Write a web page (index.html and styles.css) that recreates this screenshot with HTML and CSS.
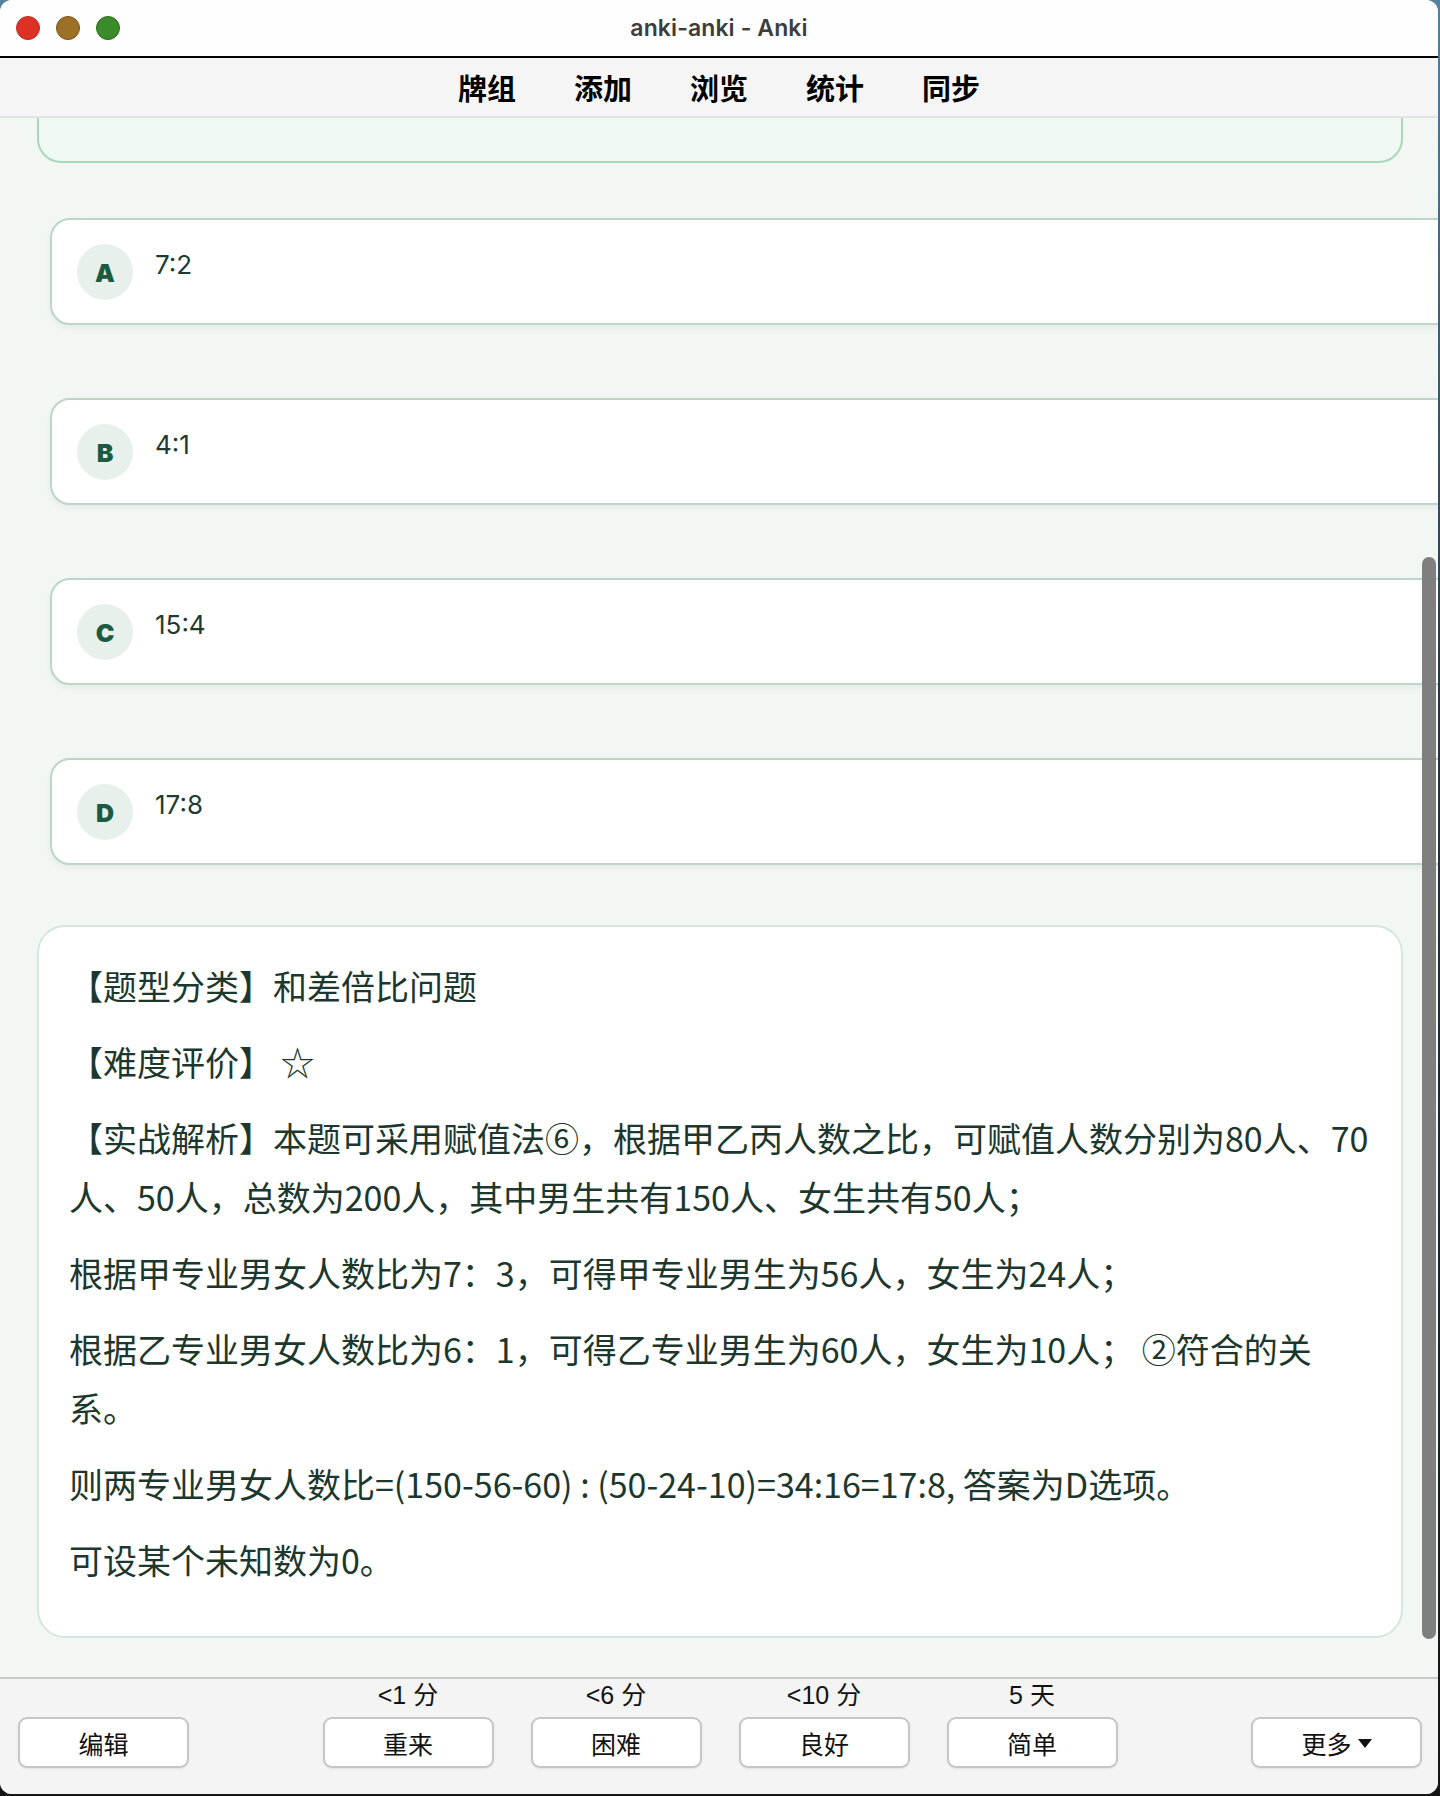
FILE: index.html
```html
<!DOCTYPE html>
<html lang="zh-CN">
<head>
    <meta charset="UTF-8">
    <meta name="viewport" content="width=device-width, initial-scale=1.0">
    <title>anki-anki - Anki</title>
    <link rel="stylesheet" href="styles.css">
</head>
<body>
    <div class="window">
        <div class="titlebar">
            <div class="lights">
                <span class="light red"></span>
                <span class="light yellow"></span>
                <span class="light green"></span>
            </div>
            <div class="title">anki-anki - Anki</div>
        </div>

        <div class="toolbar">
            <a href="#">牌组</a>
            <a href="#">添加</a>
            <a href="#">浏览</a>
            <a href="#">统计</a>
            <a href="#">同步</a>
        </div>

        <div class="review">
            <div class="question"></div>

            <div class="options">
                <div class="option">
                    <span class="letter">A</span>
                    <span class="option-text">7:2</span>
                </div>
                <div class="option">
                    <span class="letter">B</span>
                    <span class="option-text">4:1</span>
                </div>
                <div class="option">
                    <span class="letter">C</span>
                    <span class="option-text">15:4</span>
                </div>
                <div class="option">
                    <span class="letter">D</span>
                    <span class="option-text">17:8</span>
                </div>
            </div>

            <div class="explain">
                <p>【题型分类】和差倍比问题</p>
                <p>【难度评价】 ☆</p>
                <p>【实战解析】本题可采用赋值法⑥，根据甲乙丙人数之比，可赋值人数分别为80人、70人、50人，总数为200人，其中男生共有150人、女生共有50人；</p>
                <p>根据甲专业男女人数比为7：3，可得甲专业男生为56人，女生为24人；</p>
                <p>根据乙专业男女人数比为6：1，可得乙专业男生为60人，女生为10人； ②符合的关系。</p>
                <p>则两专业男女人数比=(150-56-60) : (50-24-10)=34:16=17:8, 答案为D选项。</p>
                <p>可设某个未知数为0。</p>
            </div>

            <div class="scroll-thumb"></div>
        </div>

        <div class="bottombar">
            <button class="btn">编辑</button>

            <div class="answers">
                <div class="answer">
                    <span class="due">&lt;1 分</span>
                    <button class="btn">重来</button>
                </div>
                <div class="answer">
                    <span class="due">&lt;6 分</span>
                    <button class="btn">困难</button>
                </div>
                <div class="answer">
                    <span class="due">&lt;10 分</span>
                    <button class="btn">良好</button>
                </div>
                <div class="answer">
                    <span class="due">5 天</span>
                    <button class="btn">简单</button>
                </div>
            </div>

            <button class="btn more">更多
                <svg width="14" height="9" viewBox="0 0 14 9"><path d="M0 0 H14 L7 9 Z" fill="#111"/></svg>
            </button>
        </div>
    </div>
</body>
</html>
```

FILE: styles.css
```css
html, body {
    margin: 0;
    padding: 0;
}

body {
    width: 1440px;
    height: 1796px;
    background: linear-gradient(#55809f 0%, #2a3440 40%, #151515 100%);
    overflow: hidden;
}

.window {
    width: 1438px;
    height: 1794px;
    display: flex;
    flex-direction: column;
    border-radius: 12px;
    overflow: hidden;
    background: #f2f7f4;
}

/* title bar */
.titlebar {
    height: 56px;
    flex: none;
    position: relative;
    display: flex;
    align-items: center;
    justify-content: center;
    background: #fefefe;
    border-bottom: 2px solid #000;
}

.lights {
    position: absolute;
    left: 16px;
    top: 16px;
    display: flex;
    gap: 16px;
}

.light {
    width: 22px;
    height: 22px;
    border-radius: 50%;
    border: 1px solid transparent;
}

.red { background: #de3126; border-color: #c22a20; }
.yellow { background: #9b7027; border-color: #7a5418; }
.green { background: #3a8b29; border-color: #2a6c1c; }

.title {
    font-family: Inter, "Noto Sans CJK SC", sans-serif;
    font-size: 23px;
    font-weight: 600;
    color: #3d3d3d;
    letter-spacing: 0.1px;
}

/* toolbar */
.toolbar {
    height: 58px;
    flex: none;
    display: flex;
    align-items: center;
    justify-content: center;
    gap: 58px;
    background: #f5f5f5;
    border-bottom: 2px solid #e2e2e2;
}

.toolbar a {
    font-family: "Noto Sans CJK SC", sans-serif;
    font-size: 29px;
    font-weight: 700;
    color: #000;
    text-decoration: none;
    line-height: 1;
}

/* card area */
.review {
    flex: 1;
    position: relative;
    overflow: hidden;
    background: #f2f7f4;
}

.question {
    height: 150px;
    margin: -105px 35px 0 37px;
    box-sizing: border-box;
    background: #eff8f2;
    border: 2px solid #a9d7ba;
    border-radius: 24px;
}

.options {
    display: flex;
    flex-direction: column;
    gap: 73px;
    margin: 55px -60px 0 50px;
}

.option {
    height: 107px;
    box-sizing: border-box;
    display: flex;
    align-items: center;
    gap: 22px;
    padding: 0 25px;
    background: #fff;
    border: 2px solid #bcd5c9;
    border-radius: 20px;
    box-shadow: 0 3px 6px rgba(0, 0, 0, 0.05);
}

.letter {
    width: 56px;
    height: 56px;
    flex: none;
    display: flex;
    align-items: center;
    justify-content: center;
    border-radius: 50%;
    background: #e7f0eb;
    color: #1a5b41;
    font-family: Inter, sans-serif;
    font-size: 25px;
    font-weight: 900;
    padding-top: 2px;
    box-sizing: border-box;
}

.option-text {
    align-self: flex-start;
    padding-top: 29px;
    font-family: Inter, "Noto Sans CJK SC", sans-serif;
    font-size: 26px;
    color: #1f3b31;
}

.explain {
    margin: 60px 35px 0 37px;
    padding: 29px 28px 47px 30px;
    background: #fff;
    border: 2px solid #d5e7dd;
    border-radius: 28px;
    font-family: "Noto Sans CJK SC", sans-serif;
    font-size: 34px;
    line-height: 59px;
    color: #1c382e;
}

.explain p {
    margin: 0 0 17px;
}

.explain p:last-child {
    margin-bottom: 0;
}

.scroll-thumb {
    position: absolute;
    right: 2px;
    top: 439px;
    width: 14px;
    height: 1082px;
    border-radius: 7px;
    background: #7f7f7f;
}

/* answer buttons */
.bottombar {
    flex: none;
    display: flex;
    justify-content: space-between;
    align-items: flex-end;
    padding: 2px 16px 26px 18px;
    background: #f4f4f4;
    border-top: 2px solid #c8c8c8;
}

.answers {
    display: flex;
    gap: 37px;
}

.answer {
    display: flex;
    flex-direction: column;
    align-items: center;
    gap: 8px;
}

.due {
    font-family: "Liberation Sans", "Noto Sans CJK SC", sans-serif;
    font-size: 25px;
    line-height: 28px;
    color: #111;
}

.btn {
    width: 171px;
    height: 51px;
    display: flex;
    align-items: center;
    justify-content: center;
    gap: 6px;
    padding: 0;
    background: #fff;
    border: 2px solid #c6c6c6;
    border-radius: 9px;
    box-shadow: 0 1px 2px rgba(0, 0, 0, 0.08);
    font-family: "Noto Sans CJK SC", sans-serif;
    font-size: 25px;
    color: #111;
}

.more svg {
    margin-top: 2px;
}
```
